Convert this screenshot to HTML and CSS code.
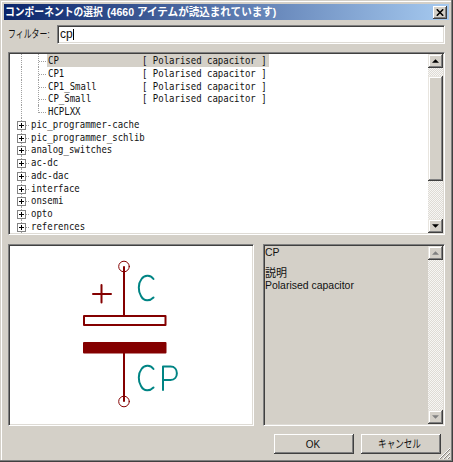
FILE: index.html
```html
<!DOCTYPE html>
<html lang="ja">
<head>
<meta charset="utf-8">
<title>コンポーネントの選択</title>
<link rel="stylesheet" href="styles.css">
</head>
<body>
<div class="window">
  <header class="titlebar">
    <h1><span>コンポーネントの選択</span><span class="count">(4660 アイテムが読込まれています)</span></h1>
    <button class="close" aria-label="閉じる"><svg width="8" height="7" viewBox="0 0 8 7"><path d="M.8.3 7.2 6.7M7.2.3.8 6.7" stroke="#000" stroke-width="1.6"/></svg></button>
  </header>
  <div class="filter">
    <label><span>フィルター:</span></label>
    <div class="field sunken">cp<i class="caret"></i></div>
  </div>
  <div class="tree sunken">
    <ul class="nodes">
      <li class="leaf selected"><span class="name">CP</span><span>[ Polarised capacitor ]</span></li>
      <li class="leaf"><span class="name">CP1</span><span>[ Polarised capacitor ]</span></li>
      <li class="leaf"><span class="name">CP1_Small</span><span>[ Polarised capacitor ]</span></li>
      <li class="leaf"><span class="name">CP_Small</span><span>[ Polarised capacitor ]</span></li>
      <li class="leaf last"><span class="name">HCPLXX</span></li>
      <li class="lib"><b></b><span>pic_programmer-cache</span></li>
      <li class="lib"><b></b><span>pic_programmer_schlib</span></li>
      <li class="lib"><b></b><span>analog_switches</span></li>
      <li class="lib"><b></b><span>ac-dc</span></li>
      <li class="lib"><b></b><span>adc-dac</span></li>
      <li class="lib"><b></b><span>interface</span></li>
      <li class="lib"><b></b><span>onsemi</span></li>
      <li class="lib"><b></b><span>opto</span></li>
      <li class="lib"><b></b><span>references</span></li>
    </ul>
    <div class="scroll">
      <div class="arrow"><svg width="7" height="4" viewBox="0 0 8 4"><path d="M0 4 4 0 8 4Z"/></svg></div>
      <div class="thumb"></div>
      <div class="arrow down"><svg width="7" height="4" viewBox="0 0 8 4"><path d="M0 0 4 4 8 0Z"/></svg></div>
    </div>
  </div>
  <div class="panes">
    <div class="preview sunken">
      <svg width="242" height="178" viewBox="10 246 242 178" fill="none" stroke="#840000" stroke-width="2" stroke-linecap="round" stroke-linejoin="round">
        <g stroke-width="1"><circle cx="124" cy="266.5" r="5.3"/><circle cx="124" cy="401.5" r="5.3"/></g>
        <path d="M124 267V315M124 353V401M93 294H111M101.500 285V302.500"/>
        <rect x="84" y="316" width="81.500" height="9"/>
        <rect x="84" y="343" width="81.500" height="9.500" fill="#840000"/>
        <g stroke="#008484"><path d="M153.500 279C151 275.500 145 274 141.500 279C138 283.500 138 291.500 141 296C144 302 150 301 153.500 297.500"/><path d="M153.500 369C151 365.500 145 364 141.500 369C138 373.500 138 381.500 141 386C144 392 150 391 153.500 387.500M163 390V366.500H170.500C179 366.500 179 380 170.500 380H163"/></g>
      </svg>
    </div>
    <div class="details sunken">
      <div class="info">
        <p><span>CP</span></p>
        <p class="heading"><span>説明</span></p>
        <p><span>Polarised capacitor</span></p>
      </div>
      <div class="scroll disabled">
        <div class="arrow"><svg width="7" height="4" viewBox="0 0 8 4"><path d="M0 4 4 0 8 4Z"/></svg></div>
        <div class="arrow down"><svg width="7" height="4" viewBox="0 0 8 4"><path d="M0 0 4 4 8 0Z"/></svg></div>
      </div>
    </div>
  </div>
  <footer class="actions">
    <button class="ok"><span>OK</span></button>
    <button class="cancel"><span>キャンセル</span></button>
    <svg class="grip" width="11" height="11" viewBox="0 0 11 11"><path d="M0 11 11 0M4 11 11 4M8 11 11 8" stroke="#fff"/><path d="M1 11 11 1M5 11 11 5M9 11 11 9" stroke="#888580"/></svg>
  </footer>
</div>
</body>
</html>
```

FILE: styles.css
```css
* { box-sizing: border-box; }
body { margin: 0; background: #d4d0c8; overflow: hidden; }
.window {
  position: relative;
  width: 453px;
  height: 462px;
  padding: 4px 4px 0;
  background: #d4d0c8;
  box-shadow: inset -1px -1px #404040, inset -2px -2px #808080, inset 1px 1px #d4d0c8, inset 2px 2px #fff;
  font: 11px/13px "Liberation Sans", "Noto Sans CJK JP", sans-serif;
  color: #111;
}
h1, p, ul { margin: 0; padding: 0; list-style: none; }
span { display: inline-block; white-space: pre; transform-origin: 0 50%; }
button { padding: 0; font: inherit; color: inherit; background: #d4d0c8; border: 0; display: flex; align-items: center; justify-content: center; box-shadow: inset -1px -1px #404040, inset 1px 1px #fff, inset -2px -2px #808080; }
.sunken { border: 1px solid; border-color: #808080 #fff #fff #808080; box-shadow: inset 1px 1px #404040, inset -1px -1px #dedbd5; }

.titlebar { height: 16px; display: flex; align-items: center; justify-content: space-between; padding-right: 2px; background: linear-gradient(90deg, #0a246a, #a6caf0); }
h1 { display: flex; padding-left: 1px; font: bold 11px/16px "Liberation Sans", "Noto Sans CJK JP", sans-serif; color: #fff; }
h1 span { width: 102px; transform: scaleX(.89); }
h1 .count { width: 170px; transform: scaleX(.96); }
.close { width: 14px; height: 13px; }

.filter { display: flex; height: 19px; margin-top: 5px; padding-right: 4px; }
.filter label { width: 53px; padding: 3px 0 0 4px; }
.filter label span { transform: scaleX(.72); }
.field { flex: 1; display: flex; align-items: center; background: #fff; padding-left: 2px; font-size: 12px; }
.caret { width: 1px; height: 11px; background: #000; }

.tree { display: flex; height: 183px; margin: 8px 4px 0; padding: 1px; background: #fff; }
.nodes { flex: 1; min-width: 0; height: 179px; overflow: hidden; font: 9px/12.75px "DejaVu Sans Mono", monospace; }
.nodes li { position: relative; display: flex; height: 12.75px; }
.nodes span { height: 12.75px; transform: translateY(.5px) scaleY(1.15); }
.leaf { width: 259px; padding-left: 38px; }
.leaf .name { width: 94px; }
.leaf.selected { background: linear-gradient(90deg, transparent 37px, #d4d0c8 37px); }
.nodes li::before { content: ""; position: absolute; left: 11px; top: 0; height: 13px; border-left: 1px dotted #a0a0a0; }
.leaf::after { content: ""; position: absolute; left: 28px; top: 0; width: 8px; height: 13px; border-left: 1px dotted #a0a0a0; background: repeating-linear-gradient(90deg, #a0a0a0 0 1px, transparent 1px 2px) 0 7px / 100% 1px no-repeat; }
.leaf.last::after { height: 8px; }
.lib { padding-left: 21px; }
.lib::after { content: ""; position: absolute; left: 16px; top: 7px; width: 3px; border-top: 1px dotted #a0a0a0; }
.lib b { position: absolute; z-index: 1; left: 7px; top: 3px; width: 9px; height: 9px; border: 1px solid #848484; background: linear-gradient(#000, #000) 1px 3px / 5px 1px no-repeat, linear-gradient(#000, #000) 3px 1px / 1px 5px no-repeat, #fff; }

.scroll { width: 15px; flex: none; display: flex; flex-direction: column; background: repeating-conic-gradient(#dedbd5 0 25%, #f7f6f4 0 50%) 0 0 / 2px 2px; }
.arrow, .thumb { background: #d4d0c8; box-shadow: inset -1px -1px #404040, inset 1px 1px #e8e5df, inset -2px -2px #808080, inset 2px 2px #fff; }
.arrow { height: 14px; display: flex; align-items: center; justify-content: center; }
.thumb { height: 105px; margin-top: 8px; }
.down { margin-top: auto; }
.disabled path { fill: #808080; }

.panes { display: flex; justify-content: space-between; height: 182px; margin: 9px 4px 0; }
.preview { width: 246px; padding: 1px; background: #fff; }
.preview svg { display: block; }
.details { display: flex; width: 182px; padding: 1px; }
.info { flex: 1; min-width: 0; }
.info p { height: 12px; line-height: 13px; }
.info span { transform: scaleX(.95); }
.info .heading { margin-top: 9px; }
.info .heading span { transform: scaleX(1); }

.actions { display: flex; gap: 7px; justify-content: flex-end; padding: 8px 8px 0 0; }
.actions button { width: 80px; height: 20px; }
.ok span { transform: translateX(-1px) scaleX(.9); transform-origin: center; }
.cancel span { transform: translateX(-2px) scaleX(.78); transform-origin: center; }
.grip { position: absolute; right: 3px; bottom: 3px; }
```
